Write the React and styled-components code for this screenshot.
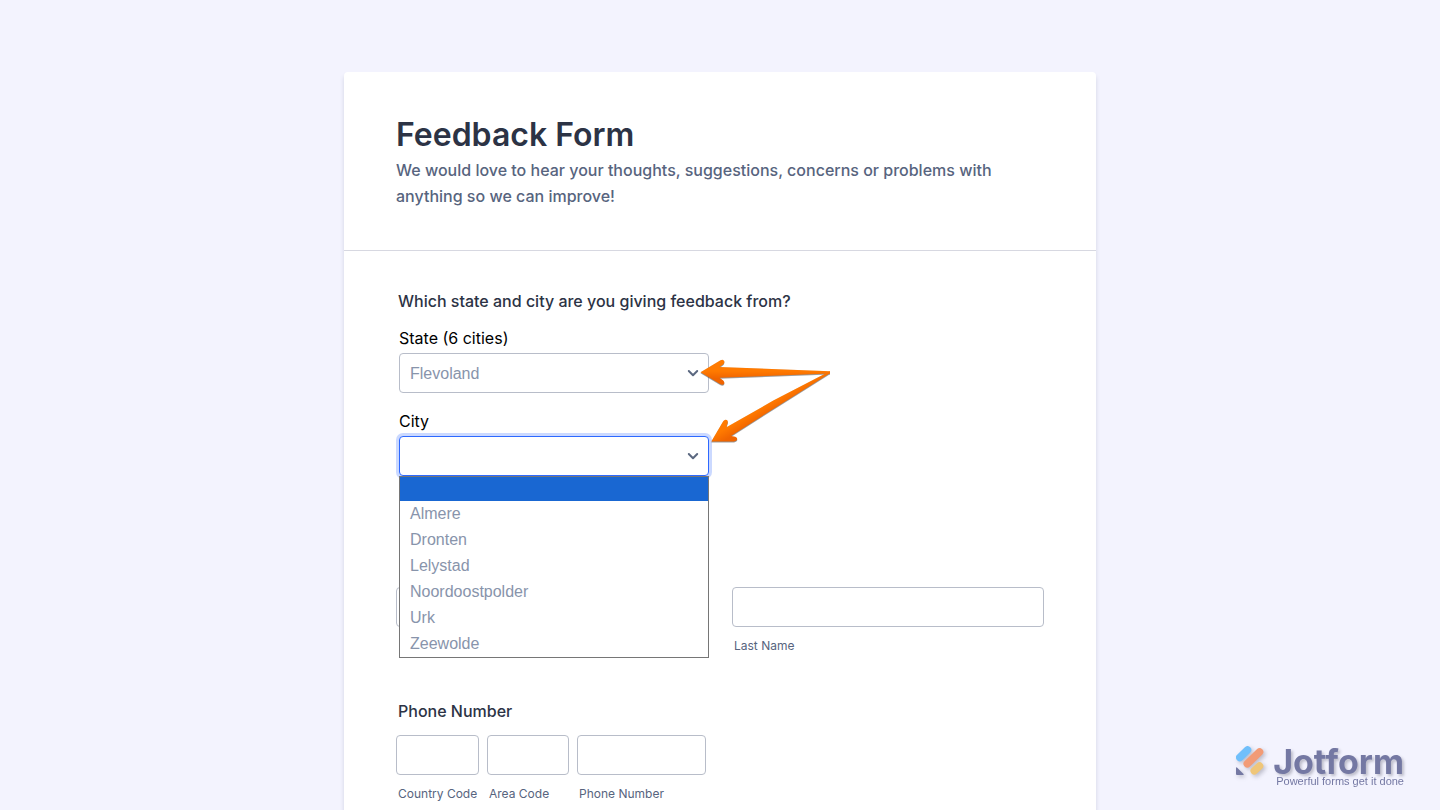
import React from "react";
import styled, { createGlobalStyle, css } from "styled-components";

const GlobalStyle = createGlobalStyle`
  *, *::before, *::after { box-sizing: border-box; }
  body {
    margin: 0;
    background: #f3f3fe;
    font-family: Inter, "Liberation Sans", sans-serif;
    color: #2c3345;
  }
`;

const Page = styled.main`
  min-height: 100vh;
  padding-top: 72px;
  display: flex;
  justify-content: center;
`;

const FormCard = styled.form`
  width: 100%;
  max-width: 752px;
  background: #fff;
  border-radius: 4px 4px 0 0;
  box-shadow: 0 4px 4px rgba(87, 100, 126, 0.21);
`;

const FormHeader = styled.header`
  padding: 43px 52px 41px;
  border-bottom: 1px solid #d7d8e1;
`;

const Title = styled.h1`
  margin: 0;
  font-size: 32px;
  line-height: 40px;
  font-weight: 600;
`;

const Subtitle = styled.p`
  margin: 2px 0 0;
  font-size: 16px;
  line-height: 26px;
  font-weight: 500;
  color: #57647e;
`;

const FormBody = styled.div`
  padding: 40px 52px 0;
`;

const fieldText = css`
  font-size: 16px;
  line-height: 20px;
`;

const Question = styled.fieldset`
  margin: 0;
  padding: 0;
  border: 0;
  min-width: 0;
`;

const Legend = styled.legend`
  ${fieldText}
  padding: 0 2px;
  font-weight: 500;
`;

const SelectStack = styled.div`
  position: relative;
  width: 310px;
  margin: 17px 0 0 3px;
  display: flex;
  flex-direction: column;
  gap: 18px;
`;

const SelectField = styled.div`
  position: relative;
  display: flex;
  flex-direction: column;
  gap: 5px;
`;

const SelectLabel = styled.label`
  ${fieldText}
  color: #000;
`;

const SelectBox = styled.div`
  position: relative;
  display: flex;
`;

const inputFrame = css`
  width: 100%;
  height: 40px;
  border: 1px solid #b8bdc9;
  border-radius: 4px;
  background: #fff;
  outline: none;
`;

const Select = styled.select`
  ${inputFrame}
  appearance: none;
  padding: 0 32px 0 10px;
  font: 16px "Liberation Sans", sans-serif;
  color: #8894ab;
  ${({ $open }) =>
    $open &&
    css`
      border-color: #2e69ff;
      box-shadow: 0 0 0 3px rgba(46, 105, 255, 0.25);
    `}
`;

const Chevron = styled.svg`
  position: absolute;
  top: 16px;
  right: 10px;
  pointer-events: none;
`;

const Options = styled.ul`
  position: absolute;
  z-index: 1;
  top: 100%;
  left: 0;
  right: 0;
  margin: 0;
  padding: 0;
  list-style: none;
  background: #fff;
  border: 1px solid #767676;
`;

const Option = styled.li`
  height: ${({ $active }) => ($active ? 24 : 26)}px;
  padding: 0 10px;
  font: 16px/25px "Liberation Sans", sans-serif;
  color: #8894ab;
  background: ${({ $active }) => ($active ? "#1967d2" : "transparent")};
`;

const Pointers = styled.svg`
  position: absolute;
  z-index: 2;
  left: 300px;
  top: 30px;
  pointer-events: none;
`;

const NameRow = styled.div`
  margin-top: 111px;
  display: grid;
  grid-template-columns: 1fr 1fr;
  gap: 24px;
`;

const PhoneRow = styled.div`
  margin-top: 14px;
  display: grid;
  grid-template-columns: 83px 82px 129px;
  gap: 8px;
`;

const PhoneQuestion = styled(Question)`
  margin-top: 47px;
`;

const Field = styled.div`
  min-width: 0;
`;

const TextInput = styled.input`
  ${inputFrame}
  display: block;
  padding: 0 10px;
  font: 16px Inter, sans-serif;
`;

const SubLabel = styled.label`
  display: block;
  margin-top: 11px;
  padding-left: 2px;
  font-size: 12px;
  line-height: 16px;
  white-space: nowrap;
  color: #57647e;
`;

const Brand = styled.a`
  position: fixed;
  right: 36px;
  bottom: 23px;
  display: flex;
  align-items: flex-start;
  gap: 8px;
  color: #7478a3;
  text-decoration: none;
`;

const BrandMark = styled.svg`
  filter: drop-shadow(2px 2px 2px rgba(60, 60, 80, 0.3));
`;

const BrandText = styled.span`
  padding-top: 4px;
  display: flex;
  flex-direction: column;
  align-items: flex-end;
`;

const BrandName = styled.span`
  font-size: 34px;
  line-height: 26px;
  font-weight: 700;
  text-shadow: 2px 2px 3px rgba(60, 60, 80, 0.3);
`;

const Tagline = styled.span`
  font: 11px/12px "Liberation Sans", sans-serif;
  white-space: nowrap;
`;

const cities = ["", "Almere", "Dronten", "Lelystad", "Noordoostpolder", "Urk", "Zeewolde"];

const phoneParts = [
  { id: "country-code", label: "Country Code" },
  { id: "area-code", label: "Area Code" },
  { id: "phone-number", label: "Phone Number" },
];

function ChevronIcon() {
  return (
    <Chevron width="12" height="9" viewBox="0 0 12 9" fill="none" aria-hidden="true">
      <path d="M1.8 2 6 6.2 10.2 2" stroke="#5b6880" strokeWidth="2" strokeLinecap="round" strokeLinejoin="round" />
    </Chevron>
  );
}

function PointerArrows() {
  return (
    <Pointers width="134" height="90" viewBox="699 358 134 90" aria-hidden="true">
      <defs>
        <linearGradient id="flat" x1="0" y1="0" x2="0" y2="1">
          <stop offset="0.45" stopColor="#ff7a00" />
          <stop offset="0.75" stopColor="#f06400" />
        </linearGradient>
        <linearGradient id="slant" gradientUnits="userSpaceOnUse" x1="764" y1="403" x2="771" y2="415">
          <stop offset="0.2" stopColor="#ff7a00" />
          <stop offset="0.9" stopColor="#f06400" />
        </linearGradient>
        <filter id="lift" x="-10%" y="-10%" width="120%" height="125%" colorInterpolationFilters="sRGB">
          <feDropShadow dx="0" dy="0.8" stdDeviation="0.4" floodColor="#333" floodOpacity="0.6" />
        </filter>
      </defs>
      <g filter="url(#lift)">
        <path d="M700.5 372.3 720.5 360.3Q723.3 358.9 724.3 361.3 724.7 363.2 722.7 364.8L719.5 367 830 371.2V373.5L719.5 377.8 723.2 380.6Q725 382.4 724 384 722.6 385.6 720 384Z" fill="url(#flat)" />
        <path d="M711.3 441.5 723.2 421.3Q724.7 419.1 726.8 420.1 728.3 421.2 727.6 423.2L726.4 427.2 773.3 400.6 829.8 371.3 830 373.3 773.3 409 731 435.9 735.2 436.7Q737.6 437.5 737.2 439.5 736.6 441.3 734 441.4Z" fill="url(#slant)" />
      </g>
    </Pointers>
  );
}

function BrandLogo() {
  return (
    <Brand href="#">
      <BrandMark width="30" height="32" viewBox="0 0 30 32" aria-hidden="true">
        <g strokeWidth="7.6" strokeLinecap="round">
          <path d="M4.8 12.5 12.5 5" stroke="#70bffb" />
          <path d="M12.3 18.8 24.5 7" stroke="#f29b76" />
          <path d="M19.3 25.8 24.5 21" stroke="#efc679" />
        </g>
        <path d="M1 23.5Q1 21.5 2.5 23L8.5 29Q9.3 30 8 30H2Q1 30 1 29Z" fill="#7478a3" />
      </BrandMark>
      <BrandText>
        <BrandName>Jotform</BrandName>
        <Tagline>Powerful forms get it done</Tagline>
      </BrandText>
    </Brand>
  );
}

export default function App() {
  return (
    <>
      <GlobalStyle />
      <Page>
        <FormCard>
          <FormHeader>
            <Title>Feedback Form</Title>
            <Subtitle>
              We would love to hear your thoughts, suggestions, concerns or problems with anything so we can improve!
            </Subtitle>
          </FormHeader>
          <FormBody>
            <Question>
              <Legend>Which state and city are you giving feedback from?</Legend>
              <SelectStack>
                <SelectField>
                  <SelectLabel htmlFor="state">State (6 cities)</SelectLabel>
                  <SelectBox>
                    <Select id="state" defaultValue="Flevoland">
                      <option>Flevoland</option>
                    </Select>
                    <ChevronIcon />
                  </SelectBox>
                </SelectField>
                <SelectField>
                  <SelectLabel htmlFor="city">City</SelectLabel>
                  <SelectBox>
                    <Select id="city" defaultValue="" $open>
                      <option value="" />
                    </Select>
                    <ChevronIcon />
                    <Options role="listbox" aria-label="City">
                      {cities.map((city) => (
                        <Option key={city} role="option" aria-selected={!city} $active={!city}>
                          {city}
                        </Option>
                      ))}
                    </Options>
                  </SelectBox>
                </SelectField>
                <PointerArrows />
              </SelectStack>
            </Question>
            <NameRow>
              <Field>
                <TextInput id="first-name" aria-label="First Name" />
              </Field>
              <Field>
                <TextInput id="last-name" />
                <SubLabel htmlFor="last-name">Last Name</SubLabel>
              </Field>
            </NameRow>
            <PhoneQuestion>
              <Legend>Phone Number</Legend>
              <PhoneRow>
                {phoneParts.map(({ id, label }) => (
                  <Field key={id}>
                    <TextInput id={id} type="tel" />
                    <SubLabel htmlFor={id}>{label}</SubLabel>
                  </Field>
                ))}
              </PhoneRow>
            </PhoneQuestion>
          </FormBody>
        </FormCard>
      </Page>
      <BrandLogo />
    </>
  );
}
